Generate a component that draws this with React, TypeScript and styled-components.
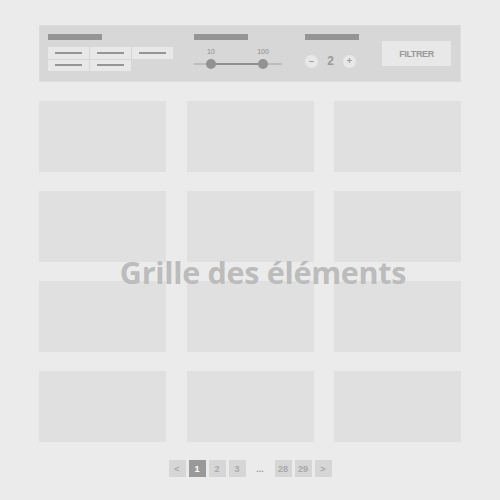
import React from "react";
import styled, { createGlobalStyle } from "styled-components";

const Global = createGlobalStyle`
  html, body { margin: 0; padding: 0; background: #ebebeb; }
  body { font-family: "Open Sans", "Liberation Sans", sans-serif; }
`;

const Page = styled.div`
  width: 500px;
  height: 500px;
  box-sizing: border-box;
  padding: 25px 39px 0 39px;
  background: #ebebeb;
`;

const Toolbar = styled.div`
  height: 57px;
  box-sizing: border-box;
  background: #d7d7d7;
  box-shadow: inset 0 0 0 1px #dcdcdc;
  display: flex;
  align-items: flex-start;
  padding: 9px 10px 0 9px;
`;

const Section = styled.div<{ $w: number; $mr?: number }>`
  width: ${(p) => p.$w}px;
  margin-right: ${(p) => p.$mr ?? 0}px;
  display: flex;
  flex-direction: column;
  flex-shrink: 0;
`;

const TitleBar = styled.div`
  width: 54px;
  height: 6px;
  background: #959595;
`;

const ChipGrid = styled.div`
  margin-top: 7px;
  display: grid;
  grid-template-columns: repeat(3, 41px);
  grid-auto-rows: 11.5px;
  column-gap: 1px;
  row-gap: 1px;
`;

const Chip = styled.div`
  background: #e8e8e8;
  display: flex;
  align-items: center;
  justify-content: center;
`;

const ChipLine = styled.div`
  width: 27px;
  height: 2px;
  background: #959595;
`;

const SliderBox = styled.div`
  position: relative;
  width: 88px;
  height: 30px;
  margin-top: 6px;
`;

const SliderLabel = styled.span<{ $x: number }>`
  position: absolute;
  top: 1px;
  left: ${(p) => p.$x}px;
  transform: translateX(-50%);
  font-family: "Liberation Sans", sans-serif;
  font-size: 7px;
  line-height: 10px;
  color: #8c8c8c;
`;

const Track = styled.div`
  position: absolute;
  left: 0;
  right: 0;
  top: 17px;
  height: 2px;
  background: #bcbcbc;
`;

const TrackActive = styled.div`
  position: absolute;
  top: 17px;
  height: 2px;
  background: #909090;
`;

const Handle = styled.div<{ $x: number }>`
  position: absolute;
  top: 13px;
  left: ${(p) => p.$x - 5}px;
  width: 10px;
  height: 10px;
  border-radius: 50%;
  background: #929292;
`;

const CounterRow = styled.div`
  margin-top: 14px;
  display: flex;
  align-items: center;
`;

const RoundBtn = styled.div`
  width: 13px;
  height: 13px;
  border-radius: 50%;
  background: #e8e8e8;
  color: #999;
  font-family: "Liberation Sans", sans-serif;
  font-weight: bold;
  font-size: 9px;
  line-height: 13px;
  text-align: center;
`;

const Count = styled.span`
  width: 25px;
  text-align: center;
  font-family: "Liberation Sans", sans-serif;
  font-weight: bold;
  font-size: 12px;
  color: #999;
`;

const FilterButton = styled.div`
  margin-top: 7px;
  width: 69px;
  height: 25px;
  background: #e8e8e8;
  color: #999;
  font-family: "Liberation Sans", sans-serif;
  font-weight: bold;
  font-size: 9px;
  letter-spacing: -0.4px;
  display: flex;
  align-items: center;
  justify-content: center;
`;

const GridWrap = styled.div`
  position: relative;
  margin-top: 19px;
`;

const Grid = styled.div`
  display: grid;
  grid-template-columns: repeat(3, 1fr);
  grid-auto-rows: 71px;
  column-gap: 20.5px;
  row-gap: 19px;
`;

const Card = styled.div`
  background: #e0e0e0;
`;

const Overlay = styled.div`
  position: absolute;
  inset: 0;
  display: flex;
  align-items: center;
  justify-content: center;
  padding-left: 26px;
  font-family: "Open Sans", sans-serif;
  font-weight: 700;
  font-size: 30.5px;
  letter-spacing: -0.3px;
  color: #bcbcbc;
  pointer-events: none;
`;

const Pager = styled.div`
  margin-top: 18px;
  display: flex;
  justify-content: center;
  gap: 3px;
`;

const PageBox = styled.div<{ $active?: boolean }>`
  width: 17px;
  height: 17px;
  background: ${(p) => (p.$active ? "#999999" : "#d6d6d6")};
  color: ${(p) => (p.$active ? "#ffffff" : "#a8a8a8")};
  font-family: "Liberation Sans", sans-serif;
  font-weight: bold;
  font-size: 9px;
  display: flex;
  align-items: center;
  justify-content: center;
`;

const Ellipsis = styled.div`
  width: 23px;
  height: 17px;
  color: #999;
  font-family: "Liberation Sans", sans-serif;
  font-weight: bold;
  font-size: 9px;
  display: flex;
  align-items: center;
  justify-content: center;
`;

export default function App() {
  const pages: Array<{ label: string; active?: boolean } | null> = [
    { label: "<" },
    { label: "1", active: true },
    { label: "2" },
    { label: "3" },
    null,
    { label: "28" },
    { label: "29" },
    { label: ">" },
  ];
  return (
    <>
      <Global />
      <Page>
        <Toolbar>
          <Section $w={146}>
            <TitleBar />
            <ChipGrid>
              {[0, 1, 2, 3, 4].map((i) => (
                <Chip key={i}>
                  <ChipLine />
                </Chip>
              ))}
            </ChipGrid>
          </Section>
          <Section $w={88} $mr={23}>
            <TitleBar />
            <SliderBox>
              <SliderLabel $x={17}>10</SliderLabel>
              <SliderLabel $x={69}>100</SliderLabel>
              <Track />
              <TrackActive style={{ left: 17, width: 52 }} />
              <Handle $x={17} />
              <Handle $x={69} />
            </SliderBox>
          </Section>
          <Section $w={77}>
            <TitleBar />
            <CounterRow>
              <RoundBtn>–</RoundBtn>
              <Count>2</Count>
              <RoundBtn>+</RoundBtn>
            </CounterRow>
          </Section>
          <FilterButton>FILTRER</FilterButton>
        </Toolbar>
        <GridWrap>
          <Grid>
            {Array.from({ length: 12 }).map((_, i) => (
              <Card key={i} />
            ))}
          </Grid>
          <Overlay>Grille des éléments</Overlay>
        </GridWrap>
        <Pager>
          {pages.map((p, i) =>
            p ? (
              <PageBox key={i} $active={p.active}>
                {p.label}
              </PageBox>
            ) : (
              <Ellipsis key={i}>...</Ellipsis>
            )
          )}
        </Pager>
      </Page>
    </>
  );
}
